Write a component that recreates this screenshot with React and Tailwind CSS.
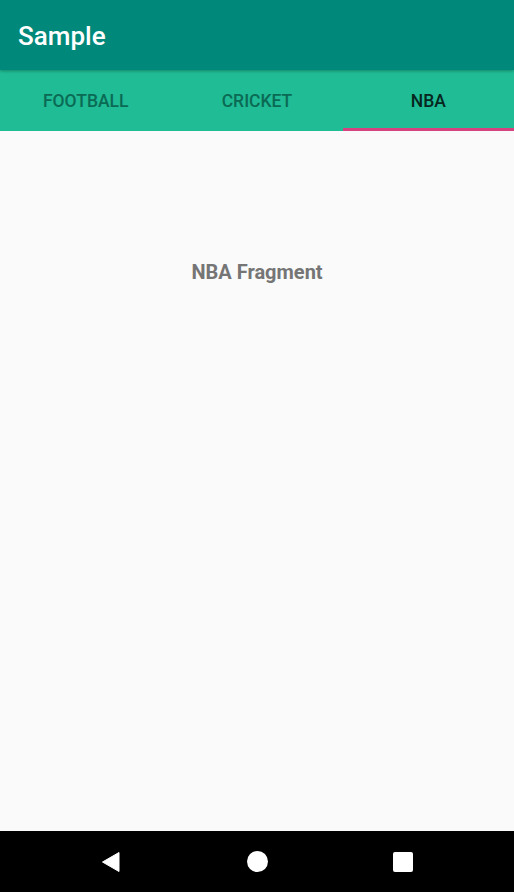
export default function App() {
  const tabs = ['FOOTBALL', 'CRICKET', 'NBA'];
  const active = 2;

  return (
    <div className="flex h-[892px] w-full flex-col bg-[#fafafa] font-['Roboto',sans-serif]">
      {/* App bar */}
      <div className="relative z-10 flex h-[70px] items-center bg-[#00897b] px-[18px] pt-[2px] shadow-[0_1px_3px_rgba(0,0,0,0.3)]">
        <span className="text-[26px] font-medium text-white">Sample</span>
      </div>

      {/* Tabs */}
      <div className="flex h-[61px] bg-[#1fbc95]">
        {tabs.map((t, i) => (
          <div key={t} className="relative flex flex-1 items-center justify-center pt-[1px]">
            <span
              className={`text-[17.5px] font-medium ${
                i === active ? 'text-[#06261e]' : 'text-[#0b6a54]'
              }`}
            >
              {t}
            </span>
            {i === active && <div className="absolute bottom-0 left-0 right-0 h-[3px] bg-[#d6427f]" />}
          </div>
        ))}
      </div>

      {/* Content */}
      <div className="flex flex-1 justify-center pt-[126px]">
        <span className="text-[20px] font-bold text-[#757575]">NBA Fragment</span>
      </div>

      {/* Nav bar */}
      <div className="flex h-[61px] items-center justify-center gap-[106px] bg-black">
        <div className="flex w-[40px] justify-center">
          <svg width="22" height="22" viewBox="0 0 22 22">
            <path d="M19 1.5 L19 20.5 L2.5 11 Z" fill="white" stroke="white" strokeWidth="1" strokeLinejoin="round" />
          </svg>
        </div>
        <div className="flex w-[40px] justify-center">
          <div className="h-[21px] w-[21px] rounded-full bg-white" />
        </div>
        <div className="flex w-[40px] justify-center">
          <div className="h-[20px] w-[20px] rounded-[2px] bg-white" />
        </div>
      </div>
    </div>
  );
}
